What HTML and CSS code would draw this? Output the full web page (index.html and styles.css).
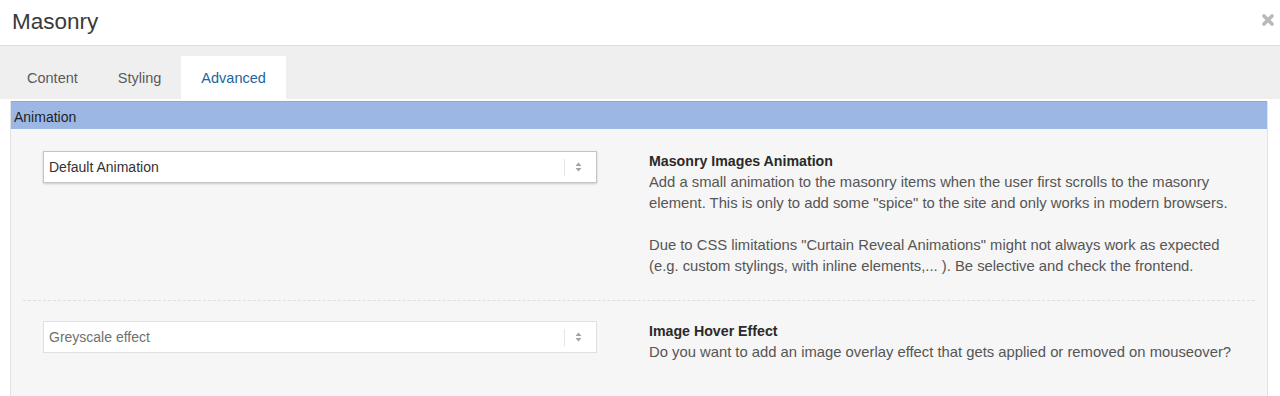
FILE: index.html
```html
<!DOCTYPE html>
<html lang="en">

<head>
    <meta charset="UTF-8">
    <meta name="viewport" content="width=device-width, initial-scale=1.0">
    <title>Masonry</title>
    <link rel="stylesheet" href="styles.css">
</head>

<body>
    <!-- Modal header -->
    <div class="modal-header">
        <h1 class="modal-title">Masonry</h1>
        <span class="close-button">
            <svg width="14" height="14" viewBox="0 0 14 14">
                <path d="M3 3 L11 11 M11 3 L3 11" stroke="#b9b9b9" stroke-width="3.6" stroke-linecap="round" />
            </svg>
        </span>
    </div>

    <!-- Tabs -->
    <div class="tabs">
        <div class="tab">Content</div>
        <div class="tab">Styling</div>
        <div class="tab active">Advanced</div>
    </div>

    <!-- Animation group -->
    <div class="panel">
        <div class="panel-heading">Animation</div>

        <div class="option">
            <div class="option-field">
                <div class="select focused">
                    <span class="select-value">Default Animation</span>
                    <span class="select-arrows">
                        <svg width="7" height="10" viewBox="0 0 7 10">
                            <path d="M3.5 0.5 L6.5 4 L0.5 4 Z M3.5 9.5 L6.5 6 L0.5 6 Z" fill="#a2a2a2" />
                        </svg>
                    </span>
                </div>
            </div>
            <div class="option-info">
                <h3>Masonry Images Animation</h3>
                <p>Add a small animation to the masonry items when the user first scrolls to the masonry element. This is only to add some "spice" to the site and only works in modern browsers.</p>
                <p>Due to CSS limitations "Curtain Reveal Animations" might not always work as expected (e.g. custom stylings, with inline elements,... ). Be selective and check the frontend.</p>
            </div>
        </div>

        <div class="option">
            <div class="option-field">
                <div class="select">
                    <span class="select-value muted">Greyscale effect</span>
                    <span class="select-arrows">
                        <svg width="7" height="10" viewBox="0 0 7 10">
                            <path d="M3.5 0.5 L6.5 4 L0.5 4 Z M3.5 9.5 L6.5 6 L0.5 6 Z" fill="#a2a2a2" />
                        </svg>
                    </span>
                </div>
            </div>
            <div class="option-info">
                <h3>Image Hover Effect</h3>
                <p>Do you want to add an image overlay effect that gets applied or removed on mouseover?</p>
            </div>
        </div>
    </div>
</body>

</html>
```

FILE: styles.css
```css
body {
    margin: 0;
    height: 100vh;
    display: flex;
    flex-direction: column;
    font-family: "Liberation Sans", Arial, sans-serif;
    font-size: 14px;
    color: #333;
    background-color: #fff;
    overflow: hidden;
}

.modal-header {
    display: flex;
    justify-content: space-between;
    align-items: center;
    height: 45px;
    padding: 0 5px 0 12px;
    border-bottom: 1px solid #dcdcdc;
}

.modal-title {
    margin: 0;
    font-size: 22.5px;
    font-weight: normal;
    color: #3a3a3a;
    padding-bottom: 2px;
}

.close-button {
    display: flex;
    padding-bottom: 6px;
}

.tabs {
    display: flex;
    align-items: flex-end;
    height: 53px;
    padding-left: 7px;
    background-color: #efefef;
}

.tab {
    height: 42px;
    line-height: 42px;
    padding: 1px 20px 0;
    font-size: 14.5px;
    color: #5a5a5a;
}

.tab.active {
    background-color: #fff;
    color: #21669b;
}

.panel {
    flex: 1;
    margin: 2px 12px 0 10px;
    border: 1px solid #e2e2e2;
    border-top: none;
    border-bottom: none;
    background-color: #f6f6f6;
}

.panel-heading {
    height: 27px;
    line-height: 30px;
    padding-left: 3px;
    background-color: #9db7e4;
    border-top: 1px solid #8fa9d6;
    color: #1f1f1f;
}

.option {
    display: flex;
    margin: 0 12px;
    padding: 22px 0 23px;
}

.option + .option {
    border-top: 1px dashed #dedede;
    padding-top: 20px;
}

.option-field {
    width: 606px;
    padding-left: 20px;
}

.select {
    display: flex;
    align-items: center;
    width: 552px;
    height: 30px;
    border: 1px solid #e0e0e0;
    background-color: #fff;
}

.select.focused {
    border-color: #c4c4c4;
    box-shadow: 0 1px 2px rgba(0, 0, 0, 0.18);
}

.select-value {
    flex: 1;
    padding-left: 5px;
    color: #333;
}

.select-value.muted {
    color: #707070;
}

.select-arrows {
    display: flex;
    align-items: center;
    height: 17px;
    padding: 0 14px 0 10px;
    border-left: 1px solid #e4e4e4;
}

.option-info {
    flex: 1;
    padding-right: 14px;
    line-height: 21px;
}

.option-info h3 {
    margin: 0;
    font-size: 14.2px;
    font-weight: bold;
    color: #2a2a2a;
}

.option-info p {
    margin: 0 0 21px;
    font-size: 14.8px;
    color: #555;
}

.option-info p:last-child {
    margin-bottom: 0;
}
```
